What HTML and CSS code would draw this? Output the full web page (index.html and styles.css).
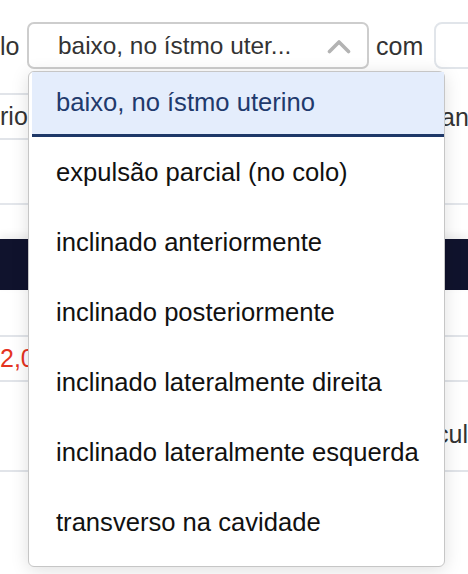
FILE: index.html
```html
<!DOCTYPE html>
<html lang="pt">
<head>
<meta charset="utf-8">
<title>Dropdown</title>
<link rel="stylesheet" href="styles.css">
</head>
<body>
<div class="page">
  <div class="row-top">
    <span class="lead">lo</span>
    <div class="select-wrap">
      <div class="select">
        <span class="select-value">baixo, no ístmo uter...</span>
        <svg class="chevron" width="24" height="16" viewBox="0 0 24 16" aria-hidden="true">
          <polyline points="2.5,13.5 12,4 21.5,13.5" fill="none" stroke="#b3b3b3" stroke-width="3.6" stroke-linecap="round" stroke-linejoin="round"/>
        </svg>
      </div>
      <ul class="menu">
        <li class="item active">baixo, no ístmo uterino</li>
        <li class="item">expulsão parcial (no colo)</li>
        <li class="item">inclinado anteriormente</li>
        <li class="item">inclinado posteriormente</li>
        <li class="item">inclinado lateralmente direita</li>
        <li class="item">inclinado lateralmente esquerda</li>
        <li class="item">transverso na cavidade</li>
      </ul>
    </div>
    <span class="com">com</span>
    <div class="input-right"></div>
  </div>

  <div class="row-second">
    <div class="field-left">rio</div>
    <span class="side-text">an</span>
  </div>

  <div class="divider"></div>
  <div class="dark-band"></div>

  <div class="row-value">2,00</div>
  <div class="row-calc"><span class="calc-text">cul</span></div>
</div>
</body>
</html>
```

FILE: styles.css
```css
* {
  box-sizing: border-box;
}

html,
body {
  margin: 0;
  padding: 0;
}

body {
  width: 468px;
  height: 574px;
  overflow: hidden;
  background: #ffffff;
  font-family: "Liberation Sans", Arial, Helvetica, sans-serif;
  font-size: 25px;
  line-height: 30px;
  color: #333333;
}

.page {
  display: flex;
  flex-direction: column;
}

/* top row */
.row-top {
  display: flex;
  align-items: center;
  margin-top: 22px;
  height: 47px;
}

.lead {
  flex: none;
  width: 27px;
  color: #333333;
}

.select-wrap {
  position: relative;
  flex: none;
  width: 342px;
  height: 47px;
}

.select {
  display: flex;
  align-items: center;
  justify-content: space-between;
  height: 47px;
  padding: 0 16px 0 29px;
  border: 2px solid #cdcdcd;
  border-radius: 7px;
  background: #ffffff;
}

.select-value {
  white-space: nowrap;
  font-size: 24.4px;
  color: #333333;
}

.chevron {
  display: block;
  flex: none;
}

.com {
  flex: none;
  margin-left: 7px;
  color: #333333;
}

.input-right {
  flex: none;
  width: 60px;
  height: 47px;
  margin-left: 11px;
  border: 2px solid #e1e5ea;
  border-radius: 8px;
}

/* dropdown menu */
.menu {
  position: absolute;
  top: 49px;
  left: 1px;
  width: 417px;
  margin: 0;
  padding: 0 0 4px 0;
  list-style: none;
  background: #ffffff;
  border: 1px solid #c6c6c6;
  border-radius: 6px;
  box-shadow: 0 3px 18px rgba(0, 0, 0, 0.13);
  z-index: 10;
}

.item {
  height: 70px;
  padding: 15px 0 0 27px;
  font-size: 25.6px;
  color: #111111;
  white-space: nowrap;
}

.item.active {
  height: 65px;
  margin: 0 0 5px 3px;
  padding-left: 24px;
  background: #e4edfc;
  border-bottom: 3px solid #1e3868;
  color: #1f3a6d;
}

/* second row */
.row-second {
  display: flex;
  align-items: center;
  margin-top: 24px;
  height: 47px;
}

.field-left {
  flex: none;
  width: 300px;
  height: 47px;
  padding: 6px 0 0 0;
  border-top: 2px solid #e1e4e9;
  border-bottom: 2px solid #e1e4e9;
  color: #333333;
}

.side-text {
  flex: none;
  margin-left: 141px;
  color: #333333;
}

.divider {
  margin-top: 63px;
  height: 2px;
  background: #e3e6eb;
}

.dark-band {
  margin-top: 34px;
  height: 51px;
  background: #10132d;
  box-shadow: 0 -4px 8px rgba(0, 0, 0, 0.07);
}

.row-value {
  margin-top: 45px;
  height: 47px;
  padding-top: 6px;
  border-top: 2px solid #e1e4e9;
  border-bottom: 2px solid #e1e4e9;
  color: #e5331f;
  white-space: nowrap;
}

.row-calc {
  height: 90px;
  padding: 37px 0 0 436px;
  border-bottom: 2px solid #e1e4e9;
  white-space: nowrap;
}

.calc-text {
  color: #333333;
}
```
